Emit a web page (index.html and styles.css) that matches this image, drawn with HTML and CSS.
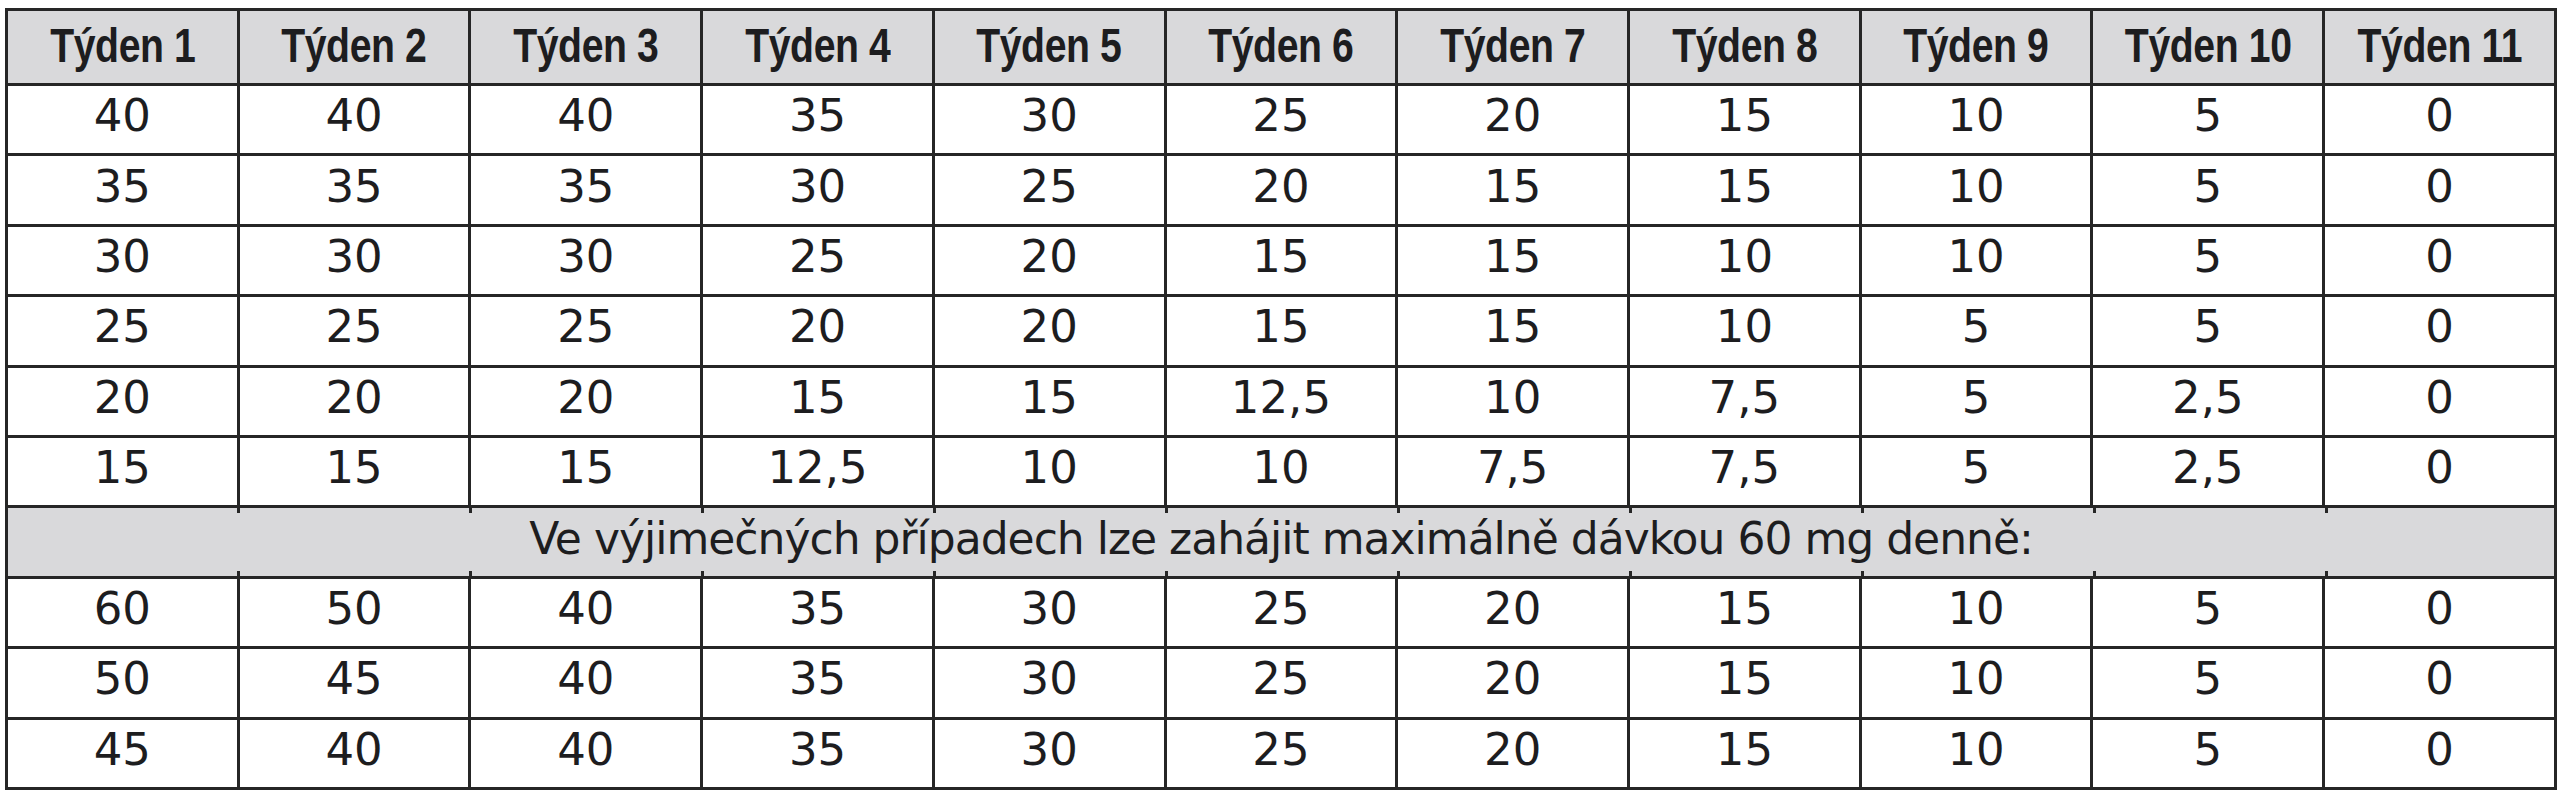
FILE: index.html
```html
<!DOCTYPE html>
<html lang="cs">
<head>
<meta charset="utf-8">
<title>Týden – dávkování</title>
<link rel="stylesheet" href="styles.css">
</head>
<body>
<table class="dose-table">
  <thead>
    <tr class="head-row">
      <th><span class="hd">Týden 1</span></th><th><span class="hd">Týden 2</span></th><th><span class="hd">Týden 3</span></th><th><span class="hd">Týden 4</span></th><th><span class="hd">Týden 5</span></th><th><span class="hd">Týden 6</span></th><th><span class="hd">Týden 7</span></th><th><span class="hd">Týden 8</span></th><th><span class="hd">Týden 9</span></th><th><span class="hd">Týden 10</span></th><th><span class="hd">Týden 11</span></th>
    </tr>
  </thead>
  <tbody>
    <tr><td>40</td><td>40</td><td>40</td><td>35</td><td>30</td><td>25</td><td>20</td><td>15</td><td>10</td><td>5</td><td>0</td></tr>
    <tr><td>35</td><td>35</td><td>35</td><td>30</td><td>25</td><td>20</td><td>15</td><td>15</td><td>10</td><td>5</td><td>0</td></tr>
    <tr><td>30</td><td>30</td><td>30</td><td>25</td><td>20</td><td>15</td><td>15</td><td>10</td><td>10</td><td>5</td><td>0</td></tr>
    <tr><td>25</td><td>25</td><td>25</td><td>20</td><td>20</td><td>15</td><td>15</td><td>10</td><td>5</td><td>5</td><td>0</td></tr>
    <tr><td>20</td><td>20</td><td>20</td><td>15</td><td>15</td><td>12,5</td><td>10</td><td>7,5</td><td>5</td><td>2,5</td><td>0</td></tr>
    <tr><td>15</td><td>15</td><td>15</td><td>12,5</td><td>10</td><td>10</td><td>7,5</td><td>7,5</td><td>5</td><td>2,5</td><td>0</td></tr>
    <tr class="note-row"><td colspan="11" class="note">Ve výjimečných případech lze zahájit maximálně dávkou 60 mg denně:</td></tr>
    <tr><td>60</td><td>50</td><td>40</td><td>35</td><td>30</td><td>25</td><td>20</td><td>15</td><td>10</td><td>5</td><td>0</td></tr>
    <tr><td>50</td><td>45</td><td>40</td><td>35</td><td>30</td><td>25</td><td>20</td><td>15</td><td>10</td><td>5</td><td>0</td></tr>
    <tr class="last-row"><td>45</td><td>40</td><td>40</td><td>35</td><td>30</td><td>25</td><td>20</td><td>15</td><td>10</td><td>5</td><td>0</td></tr>
  </tbody>
</table>
</body>
</html>
```

FILE: styles.css
```css
html, body {
  margin: 0;
  padding: 0;
  background: #ffffff;
}

body {
  padding: 8px 0 0 5px;
}

.dose-table {
  border-collapse: collapse;
  table-layout: fixed;
  width: 2552px;
  color: #1d1d1f;
  font-family: "DejaVu Sans", "Liberation Sans", sans-serif;
}

.dose-table th,
.dose-table td {
  border: 3px solid #262626;
  text-align: center;
  vertical-align: middle;
  padding: 0 0 8px 0;
  overflow: hidden;
  white-space: nowrap;
}

.head-row {
  height: 75px;
}

.head-row th {
  background: #d9d9db;
  font-family: "Liberation Sans", "Arial", sans-serif;
  font-weight: 700;
  font-size: 49px;
  padding-bottom: 4px;
}

.hd {
  display: inline-block;
  transform: scaleX(0.8);
  letter-spacing: -0.5px;
}

.dose-table tbody tr {
  height: 70.4px;
}

.dose-table td {
  font-size: 45px;
  font-weight: 400;
}

.dose-table td.note {
  background-color: #d9d9db;
  background-image:
    repeating-linear-gradient(to right, transparent 0 229px, #262626 229px 232px),
    repeating-linear-gradient(to right, transparent 0 229px, #262626 229px 232px);
  background-size: 100% 5px, 100% 5px;
  background-position: left top, left bottom;
  background-repeat: no-repeat;
  font-size: 44px;
  letter-spacing: -1px;
}

.last-row {
  height: 74px;
}
```
